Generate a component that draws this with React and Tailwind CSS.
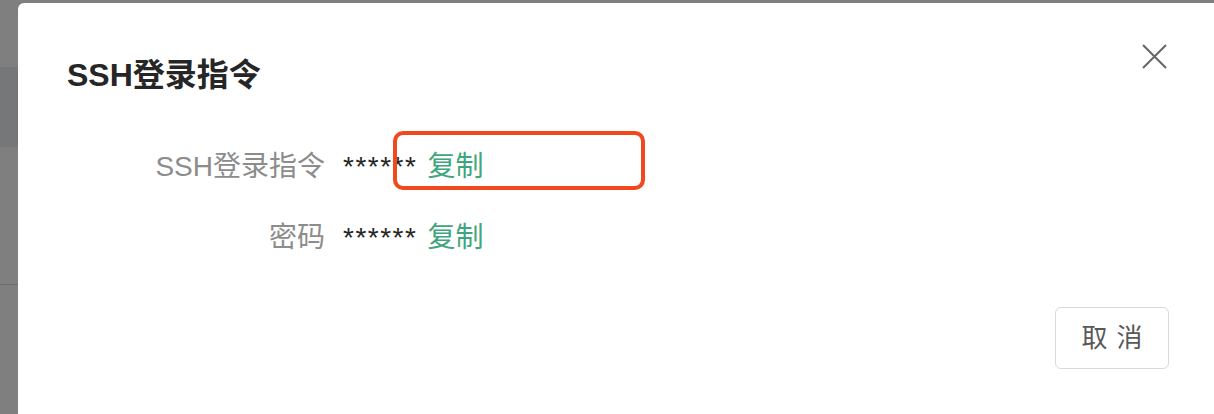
import React from 'react';

const SshDialog = () => {
  return (
    <div
      className="flex h-[414px] w-[1214px] overflow-hidden bg-[#7f7f7f] font-['Liberation_Sans','Noto_Sans_CJK_SC',sans-serif]"
    >
      {/* masked page behind */}
      <div className="flex w-[18px] shrink-0 flex-col">
        <div className="h-[67px] bg-[#7f7f7f]" />
        <div className="h-[80px] bg-[#767778]" />
        <div className="h-[137px] bg-[#7f7f7f]" />
        <div className="h-px bg-[#6e6e6e]" />
        <div className="flex-1 bg-[#7f7f7f]" />
      </div>

      <div className="flex flex-1 flex-col pt-[3px]">
        <div className="relative flex flex-1 flex-col rounded-tl-[6px] bg-white pl-[49px] pt-[41px]">
          {/* Header */}
          <div className="flex items-start justify-between pr-[47px]">
            <h2 className="mt-[11px] text-[32px] font-bold leading-[40px] text-[#262626]">SSH登录指令</h2>
            <button className="text-[#666]" title="关闭">
              <svg className="block h-[25px] w-[25px]" viewBox="0 0 25 25" fill="none" stroke="currentColor">
                <path strokeWidth="2" d="M1 1l23 23M24 1L1 24" />
              </svg>
            </button>
          </div>

          {/* Rows */}
          <div className="mt-[52px] flex flex-col gap-[31px] text-[28px] leading-[40px]">
            <div className="flex items-center">
              <span className="w-[258px] text-right text-[#8c8c8c]">SSH登录指令</span>
              <span className="ml-[18px] tracking-[1.5px] text-[#262626]">******</span>
              <span className="ml-[10px] cursor-pointer text-[#3fa57c]">复制</span>
            </div>
            <div className="flex items-center">
              <span className="w-[258px] text-right text-[#8c8c8c]">密码</span>
              <span className="ml-[18px] tracking-[1.5px] text-[#262626]">******</span>
              <span className="ml-[10px] cursor-pointer text-[#3fa57c]">复制</span>
            </div>
          </div>

          {/* Footer */}
          <div className="mt-[49px] flex justify-end pr-[45px]">
            <button className="flex h-[62px] w-[114px] items-center justify-center gap-[9px] rounded-[6px] border-[1.5px] border-[#d9d9d9] bg-white text-[26px] text-[#595959]">
              <span>取</span>
              <span>消</span>
            </button>
          </div>

          {/* annotation */}
          <div className="pointer-events-none absolute left-[375px] top-[128px] h-[59px] w-[252px] rounded-[10px] border-4 border-[#f2481d]" />
        </div>
      </div>
    </div>
  );
};

export default function App() {
  return <SshDialog />;
}
